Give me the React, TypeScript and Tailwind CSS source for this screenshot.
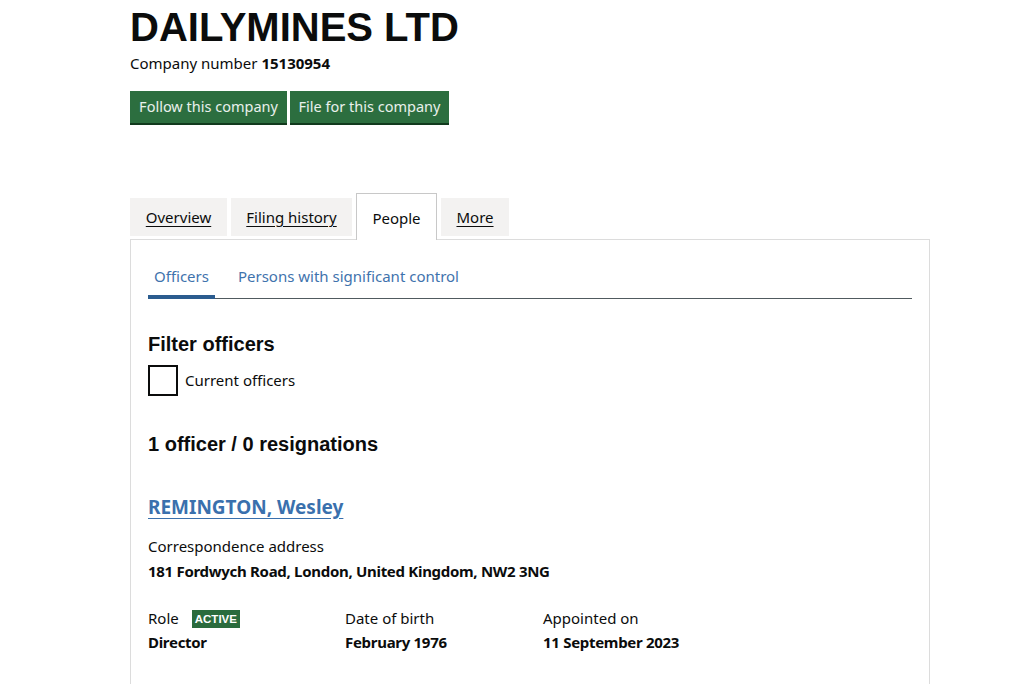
import React from "react";

const body = { fontFamily: '"Noto Sans", Arial, sans-serif' };
const heading = { fontFamily: '"Liberation Sans", Arial, sans-serif' };

function TabLink({ label, width, active }: { label: string; width: string; active?: boolean }) {
  if (active) {
    return (
      <li
        className={`relative z-10 -mb-px h-[47px] border border-b-0 border-[#c8c8c8] bg-white pt-[13px] text-center text-[15px] text-[#0b0c0c] ${width}`}
      >
        {label}
      </li>
    );
  }
  return (
    <li
      className={`mt-[5px] flex h-[38px] items-center justify-center bg-[#f3f2f1] text-[15px] text-[#0b0c0c] underline underline-offset-[3px] ${width}`}
    >
      {label}
    </li>
  );
}

function Detail({
  label,
  value,
  tag,
  width = "w-[197px]",
}: {
  label: string;
  value: string;
  tag?: string;
  width?: string;
}) {
  return (
    <div className={width}>
      <div className="flex h-[22px] items-center gap-[13px] text-[15px] text-[#0b0c0c]">
        {label}
        {tag && (
          <span
            className="bg-[#2a6b3d] px-[3px] pt-[1px] text-[11.5px] font-bold leading-[17px] text-white"
            style={heading}
          >
            {tag}
          </span>
        )}
      </div>
      <div className="mt-[1px] text-[15px] font-bold tracking-[-0.3px] text-[#0b0c0c]">{value}</div>
    </div>
  );
}

export default function App() {
  return (
    <div className="min-h-screen bg-white" style={body}>
      <div className="ml-[130px] w-[800px]">
        <h1 className="pt-[7px] text-[40px] font-bold leading-[40px] text-[#0b0c0c]" style={heading}>
          DAILYMINES LTD
        </h1>
        <p className="mt-[6px] text-[15px] leading-[20px] text-[#0b0c0c]">
          Company number <strong className="font-bold">15130954</strong>
        </p>
        <div className="mt-[18px] flex gap-[3px]">
          <button className="h-[32px] w-[157px] bg-[#2c6e3f] text-[14.5px] text-white/90 shadow-[0_2px_0_#113a1d]">
            Follow this company
          </button>
          <button className="h-[32px] w-[159px] bg-[#2c6e3f] text-[14.5px] text-white/90 shadow-[0_2px_0_#113a1d]">
            File for this company
          </button>
        </div>

        <ul className="mt-[70px] flex items-start gap-[4px]">
          <TabLink label="Overview" width="w-[97px]" />
          <TabLink label="Filing history" width="w-[121px]" />
          <TabLink label="People" width="w-[81px]" active />
          <TabLink label="More" width="w-[68px]" />
        </ul>

        <div className="border border-[#dcdcdc] px-[17px] pt-[25px] pb-[40px]">
          <div className="flex border-b border-[#505a5f] text-[15px] text-[#3f73ad]">
            <div className="-mb-px border-b-[4px] border-[#2b5c8f] px-[6px] pb-[7px]">Officers</div>
            <div className="ml-[23px] pb-[7px]">Persons with significant control</div>
          </div>

          <h2 className="mt-[33px] text-[20px] font-bold leading-[24px] text-[#0b0c0c]" style={heading}>
            Filter officers
          </h2>
          <label className="mt-[9px] flex items-center gap-[7px] text-[15px] text-[#0b0c0c]">
            <span className="block h-[31px] w-[30px] border-2 border-[#0b0c0c]" />
            Current officers
          </label>

          <h2 className="mt-[36px] text-[20px] font-bold leading-[24px] text-[#0b0c0c]" style={heading}>
            1 officer / 0 resignations
          </h2>

          <a className="mt-[38px] block text-[19px] font-bold leading-[26px] text-[#3a70ad] underline underline-offset-[4px]">
            REMINGTON, Wesley
          </a>

          <p className="mt-[15px] text-[15px] leading-[22px] text-[#0b0c0c]">Correspondence address</p>
          <p className="mt-[3px] text-[15px] font-bold leading-[22px] tracking-[-0.3px] text-[#0b0c0c]">
            181 Fordwych Road, London, United Kingdom, NW2 3NG
          </p>

          <div className="mt-[26px] flex">
            <Detail label="Role" value="Director" tag="ACTIVE" />
            <Detail label="Date of birth" value="February 1976" width="w-[198px]" />
            <Detail label="Appointed on" value="11 September 2023" />
          </div>
        </div>
      </div>
    </div>
  );
}
